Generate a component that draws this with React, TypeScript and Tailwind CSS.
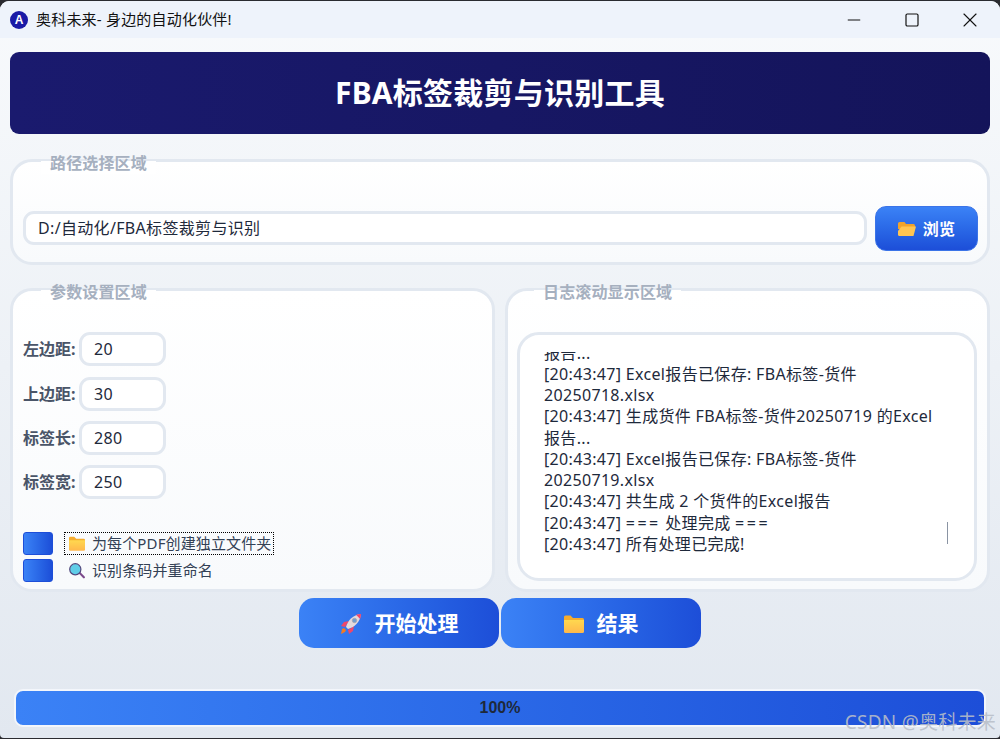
import type { ReactNode } from "react";
import { Minus, Square, X } from "lucide-react";

const logLines: ReactNode[] = [
  "[20:43:47] Excel报告已保存: FBA标签-货件",
  "20250718.xlsx",
  "[20:43:47] 生成货件 FBA标签-货件20250719 的Excel",
  "报告...",
  "[20:43:47] Excel报告已保存: FBA标签-货件",
  "20250719.xlsx",
  "[20:43:47] 共生成 2 个货件的Excel报告",
  <>
    [20:43:47] <span className="tracking-[2.5px]">===</span> 处理完成 <span className="tracking-[2.5px]">===</span>
  </>,
  "[20:43:47] 所有处理已完成!",
];

const params = [
  { label: "左边距:", value: "20" },
  { label: "上边距:", value: "30" },
  { label: "标签长:", value: "280" },
  { label: "标签宽:", value: "250" },
];

function FolderIcon({ className }: { className?: string }) {
  return (
    <svg viewBox="0 0 20 18" className={className}>
      <defs>
        <linearGradient id="folderFront" x1="0" y1="0" x2="0" y2="1">
          <stop offset="0" stopColor="#ffd84f" />
          <stop offset="1" stopColor="#ffb84d" />
        </linearGradient>
      </defs>
      <path d="M0 2a1.500 1.500 0 0 1 1.500-1.500h5L9 3h9.500A1.500 1.500 0 0 1 20 4.500V8H0z" fill="#f5ac2e" />
      <path d="M0 5h20v11.500a1.500 1.500 0 0 1-1.500 1.500h-17A1.500 1.500 0 0 1 0 16.500z" fill="url(#folderFront)" />
    </svg>
  );
}

function OpenFolderIcon({ className }: { className?: string }) {
  return (
    <svg viewBox="0 0 18 16" className={className}>
      <path d="M0 2.500A1.500 1.500 0 0 1 1.500 1h5L8 3h7.500A1.500 1.500 0 0 1 17 4.500V8H0z" fill="#f0a32c" />
      <path d="M3.500 5.500H18l-2.500 9.500H1.500A1.500 1.500 0 0 1 0 13.500V10z" fill="#ffc552" />
    </svg>
  );
}

function SearchIcon({ className }: { className?: string }) {
  return (
    <svg viewBox="0 0 16 16" className={className}>
      <path d="M9.800 10.400l1.300-1.300 4.500 4.500a1 1 0 0 1-1.500 1.500z" fill="#7b4a8c" />
      <circle cx="6.300" cy="6.300" r="5.600" fill="#5fcde8" stroke="#53497e" strokeWidth="1.200" />
    </svg>
  );
}

function RocketIcon({ className }: { className?: string }) {
  return (
    <svg viewBox="0 0 22 22" className={className}>
      <path d="M1 21l1-5 2-1 2 2-1 2z" fill="#f47b20" />
      <path d="M4 9l5-1-4 6-4-1z" fill="#f0476a" />
      <path d="M13 18l1-5-6 4 1 4z" fill="#f0476a" />
      <path d="M6 14C8 7 13 2 21 1c-1 8-6 13-13 15z" fill="#e4dadd" />
      <path d="M16 1.800c2-.5 3.500-.7 5-.8-.1 1.500-.3 3-.8 5z" fill="#f0476a" />
      <circle cx="14.500" cy="7.500" r="2.200" fill="#6f9fd0" stroke="#a9a3ad" strokeWidth="0.800" />
    </svg>
  );
}

function AppLogo() {
  return (
    <div className="flex h-[18px] w-[18px] items-center justify-center rounded-full bg-[#1a1aa6] font-['Liberation_Sans',sans-serif] text-[12px] leading-none font-bold text-white">
      A
    </div>
  );
}

function Group({ title, gap, children, className }: { title: string; gap: string; children: ReactNode; className: string }) {
  return (
    <section className={`relative rounded-[22px] border-[3px] border-[#e2e8f0] bg-linear-to-b from-white to-[#f8fafc] ${className}`}>
      <div className={`absolute top-[-10px] flex h-[22px] items-start justify-center ${gap}`}>
        <span className="bg-linear-to-b from-transparent from-40% to-white to-40% px-[9px] text-[16px] leading-[22px] font-bold tracking-[0.15px] text-[#a6b0bf]">
          {title}
        </span>
      </div>
      {children}
    </section>
  );
}

function Checkbox({ focused, icon, label }: { focused?: boolean; icon: ReactNode; label: string }) {
  return (
    <div className="flex h-[23px] items-center gap-[11px]">
      <div className="h-[23px] w-[30px] rounded-[3px] border border-[#1d4ed8] bg-linear-to-r from-[#3b82f6] to-[#1d4ed8]" />
      <div className={`flex h-[23px] items-center gap-[7px] pr-[2px] pl-[4px] ${focused ? "border border-dotted border-black" : "border border-transparent"}`}>
        {icon}
        <span className="text-[15px] leading-[21px] tracking-[0.12px] whitespace-nowrap text-[#334155]">{label}</span>
      </div>
    </div>
  );
}

function ActionButton({ icon, label }: { icon: ReactNode; label: string }) {
  return (
    <button className="flex h-[50px] w-[200px] items-center justify-center gap-[13px] rounded-[15px] bg-linear-to-r from-[#3b82f6] to-[#1d4ed8] pt-px text-[21px] font-bold text-white">
      {icon}
      {label}
    </button>
  );
}

export default function App() {
  return (
    <div className="h-[739px] w-[1000px] overflow-hidden bg-[#2a2b30] pt-px pb-px font-['Noto_Sans','Noto_Sans_CJK_SC',sans-serif]">
      <div className="flex h-full flex-col overflow-hidden rounded-t-[9px] rounded-b-[4px] bg-linear-to-b from-[#f8fafc] to-[#e2e8f0]">
        {/* title bar */}
        <div className="flex h-[37px] shrink-0 items-center bg-[#eef3fb] pr-px pl-[10px]">
          <AppLogo />
          <span className="ml-[8px] text-[15px] leading-none tracking-[0.2px] text-[#111]">奥科未来- 身边的自动化伙伴!</span>
          <div className="ml-auto flex items-center">
            <div className="flex w-[58px] justify-center">
              <Minus className="h-[20px] w-[20px] text-[#111]" strokeWidth={1.2} />
            </div>
            <div className="flex w-[58px] justify-center">
              <Square className="h-[16px] w-[16px] text-[#111]" strokeWidth={1.8} />
            </div>
            <div className="flex w-[58px] justify-center">
              <X className="h-[24px] w-[24px] text-[#111]" strokeWidth={1.1} />
            </div>
          </div>
        </div>

        <div className="flex flex-1 flex-col px-[10px]">
          <header className="mt-[14px] flex h-[82px] items-center justify-center rounded-[9px] bg-linear-to-r from-[#1a1a6e] to-[#14145a] pb-[2px] text-[30px] font-bold tracking-[0.25px] text-white">
            FBA标签裁剪与识别工具
          </header>

          <Group title="路径选择区域" gap="left-[28px]" className="mt-[25px] flex h-[106px] items-end gap-[8px] pr-[9px] pb-[11px] pl-[10px]">
            <div className="mb-[6px] flex h-[34px] flex-1 items-center rounded-[11px] border-[3px] border-[#e2e8f0] bg-white pl-[12px] text-[16px] tracking-[0.33px] text-[#1e293b]">
              D:/自动化/FBA标签裁剪与识别
            </div>
            <button className="flex h-[45px] w-[103px] items-center justify-center gap-[7px] rounded-[11px] border border-[#3b74e8] bg-linear-to-b from-[#3b82f6] to-[#1d4ed8] text-[16px] font-bold tracking-[0.2px] text-white">
              <OpenFolderIcon className="h-[16px] w-[18px]" />
              浏览
            </button>
          </Group>

          <div className="mt-[23px] grid h-[304px] grid-cols-2 gap-[10px]">
            <Group title="参数设置区域" gap="left-[28px]" className="flex flex-col pt-[41px] pr-[9px] pb-[7px] pl-[10px]">
              <div className="flex flex-col gap-[10px]">
                {params.map((p) => (
                  <div key={p.label} className="flex items-center gap-[2px] first:mb-px">
                    <span className="w-[54px] text-[16px] leading-[22px] font-bold whitespace-nowrap text-[#4a5568]">{p.label}</span>
                    <div className="flex h-[34px] w-[87px] items-center rounded-[11px] border-[3px] border-[#e2e8f0] bg-white pl-[12px] text-[16px] tracking-[0.3px] text-[#1e293b]">
                      {p.value}
                    </div>
                  </div>
                ))}
              </div>
              <div className="mt-auto flex flex-col gap-[4px]">
                <Checkbox focused icon={<FolderIcon className="h-[15px] w-[16px]" />} label="为每个PDF创建独立文件夹" />
                <Checkbox icon={<SearchIcon className="h-[16px] w-[16px]" />} label="识别条码并重命名" />
              </div>
            </Group>

            <Group title="日志滚动显示区域" gap="left-[26px]" className="pt-[41px] pr-[10px] pb-[8px] pl-[9px]">
              <div className="relative flex h-[249px] flex-col rounded-[22px] border-[3px] border-[#e2e8f0] bg-white pt-[17px] pb-[23px] pl-[24px]">
                <div className="flex flex-1 flex-col justify-end overflow-hidden text-[16px] leading-[21.25px] tracking-[0.33px] whitespace-nowrap text-[#1e293b]">
                  <div>报告...</div>
                  {logLines.map((line, i) => (
                    <div key={i}>{line}</div>
                  ))}
                </div>
                <div className="absolute top-[187px] left-[427px] h-[22px] w-px bg-[#8a94a3]" />
              </div>
            </Group>
          </div>

          <div className="mt-[6px] flex justify-center gap-[2px]">
            <ActionButton icon={<RocketIcon className="h-[22px] w-[22px]" />} label="开始处理" />
            <ActionButton icon={<FolderIcon className="h-[18px] w-[20px]" />} label="结果" />
          </div>

          <div className="relative mx-[4px] mt-[41px] h-[38px] rounded-[9px] border-[2px] border-[#f3f6fb] bg-linear-to-r from-[#3b82f6] to-[#1d4ed8]">
            <div className="flex h-full items-center justify-center font-['Liberation_Sans',sans-serif] text-[16px] font-bold text-[#1e293b]">
              100%
            </div>
            <div className="absolute top-[19px] right-[-12px] text-[19px] leading-[24px] tracking-[0.25px] whitespace-nowrap text-[#b8bec8]/90">
              CSDN @奥科未来
            </div>
          </div>
        </div>
      </div>
    </div>
  );
}
